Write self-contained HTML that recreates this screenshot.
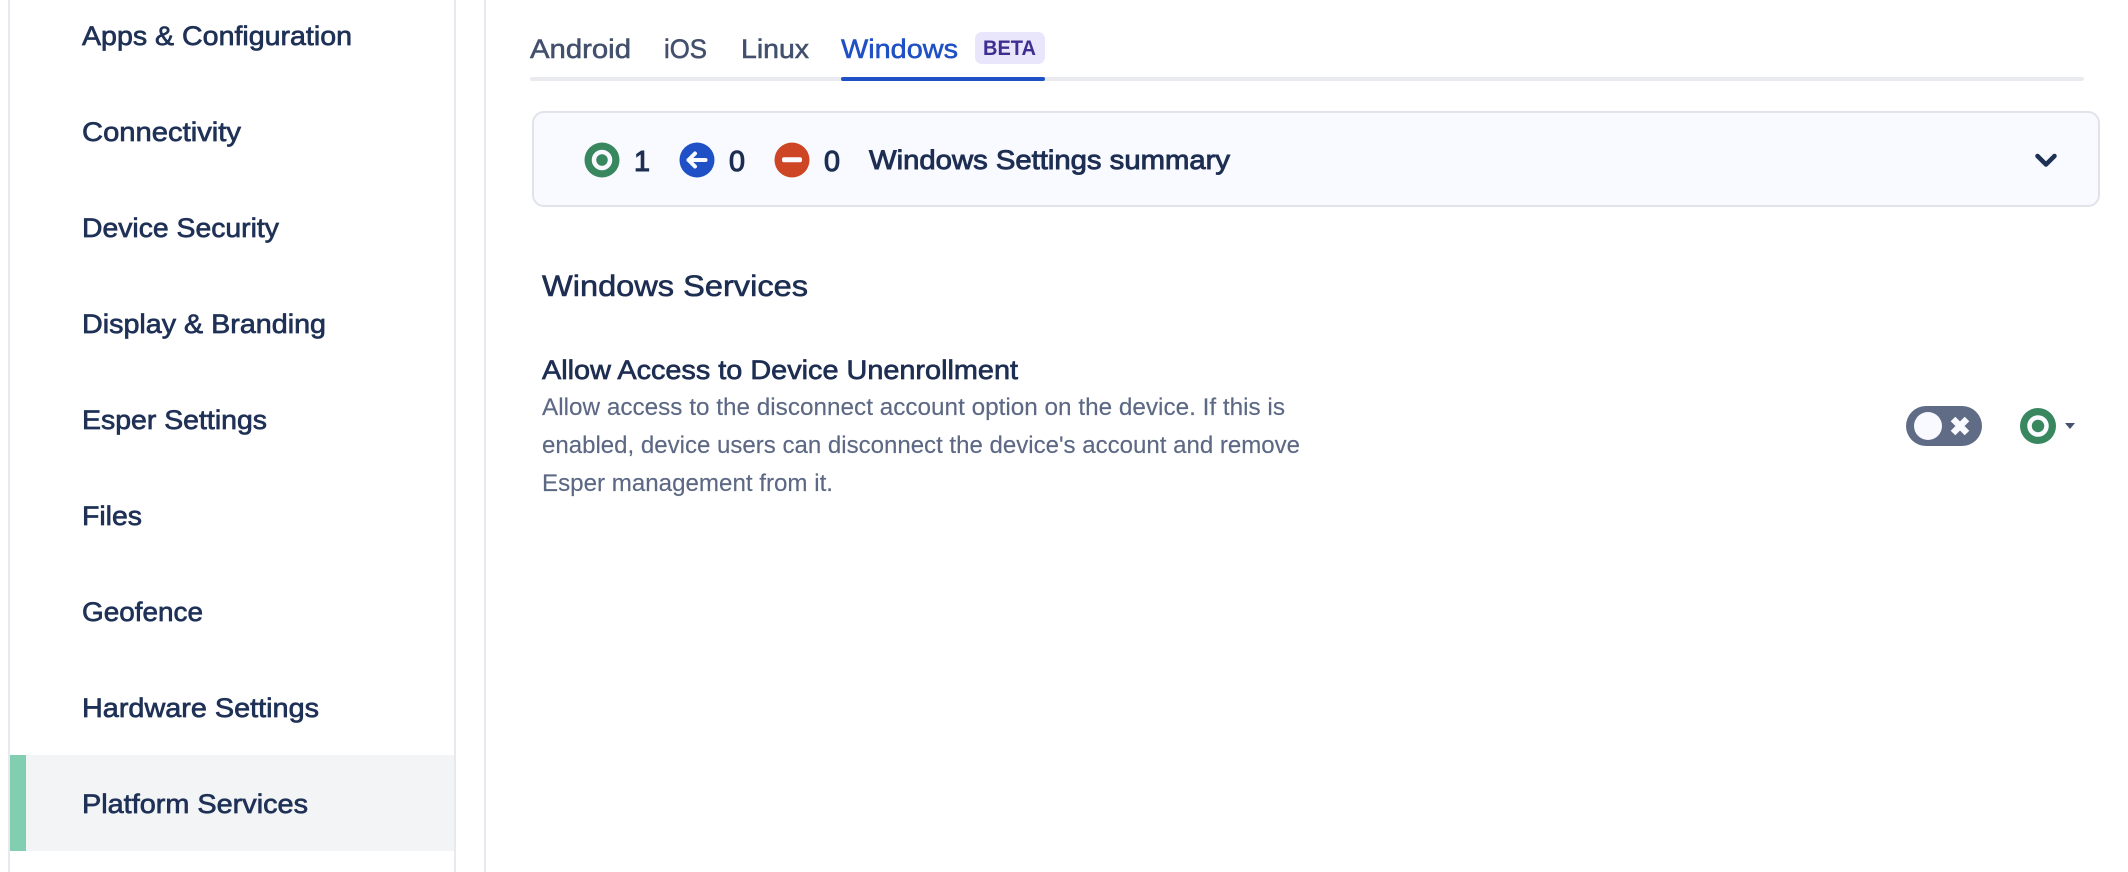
<!DOCTYPE html>
<html lang="en">
<head>
<meta charset="utf-8">
<title>Windows Settings</title>
<style>
html,body{margin:0;padding:0;width:2128px;height:872px;background:#fff;overflow:hidden}
svg{display:block}
text{font-family:"Liberation Sans",sans-serif}
.nav{font-size:27px;fill:#1f3156;stroke:#1f3156;stroke-width:.7px}
.tab{font-size:27px;fill:#43506d;stroke:#43506d;stroke-width:.55px}
.sum{font-size:27px;fill:#1d2e52;stroke:#1d2e52;stroke-width:.9px}
.num{font-size:29px;fill:#1d2e52;stroke:#1d2e52;stroke-width:1.1px}
.desc{font-size:24.5px;fill:#5c6884;stroke:#5c6884;stroke-width:.15px}
</style>
</head>
<body>
<svg width="2128" height="872" viewBox="0 0 2128 872" xmlns="http://www.w3.org/2000/svg">
  <rect x="8" y="0" width="2" height="872" fill="#e8e9ef"/>
  <rect x="454" y="0" width="2" height="872" fill="#e8e9ef"/>
  <rect x="484" y="0" width="2" height="872" fill="#e8e9ef"/>
  <rect x="26" y="755" width="428" height="96" fill="#f3f4f6"/>
  <rect x="10" y="755" width="16" height="96" fill="#82ceb0"/>

  <text class="nav" x="82" y="45" textLength="270" lengthAdjust="spacingAndGlyphs">Apps &amp; Configuration</text>
  <text class="nav" x="82" y="141" textLength="159" lengthAdjust="spacingAndGlyphs">Connectivity</text>
  <text class="nav" x="82" y="237" textLength="197" lengthAdjust="spacingAndGlyphs">Device Security</text>
  <text class="nav" x="82" y="333" textLength="244" lengthAdjust="spacingAndGlyphs">Display &amp; Branding</text>
  <text class="nav" x="82" y="429" textLength="185" lengthAdjust="spacingAndGlyphs">Esper Settings</text>
  <text class="nav" x="82" y="525" textLength="60" lengthAdjust="spacingAndGlyphs">Files</text>
  <text class="nav" x="82" y="621" textLength="121" lengthAdjust="spacingAndGlyphs">Geofence</text>
  <text class="nav" x="82" y="717" textLength="237" lengthAdjust="spacingAndGlyphs">Hardware Settings</text>
  <text class="nav" x="82" y="813" textLength="226" lengthAdjust="spacingAndGlyphs">Platform Services</text>

  <text class="tab" x="530" y="58" textLength="101" lengthAdjust="spacingAndGlyphs">Android</text>
  <text class="tab" x="664" y="58" textLength="43" lengthAdjust="spacingAndGlyphs">iOS</text>
  <text class="tab" x="741" y="58" textLength="68" lengthAdjust="spacingAndGlyphs">Linux</text>
  <text class="tab" x="841" y="58" textLength="117" lengthAdjust="spacingAndGlyphs" style="fill:#2050c5;stroke:#2050c5">Windows</text>
  <rect x="975" y="32" width="70" height="32" rx="7" fill="#e9e5fa"/>
  <text x="983" y="55" font-size="21.500" font-weight="700" fill="#3f2e91" textLength="53" lengthAdjust="spacingAndGlyphs">BETA</text>
  <rect x="530" y="77" width="1554" height="4" rx="2" fill="#e9eaef"/>
  <rect x="841" y="77" width="204" height="4" rx="2" fill="#2050c5"/>

  <rect x="533" y="112" width="1566" height="94" rx="11" fill="#f9faff" stroke="#e2e3ea" stroke-width="2"/>

  <circle cx="602" cy="160" r="17.500" fill="#38875f"/>
  <circle cx="602" cy="160" r="8" fill="none" stroke="#f9faff" stroke-width="4.500"/>
  <text class="num" x="634" y="171" textLength="16" lengthAdjust="spacingAndGlyphs">1</text>

  <circle cx="697" cy="160" r="17.500" fill="#2050c5"/>
  <path d="M688.500 160H705.500M695 153.500L688.500 160L695 166.500" fill="none" stroke="#f9faff" stroke-width="4" stroke-linecap="round" stroke-linejoin="round"/>
  <text class="num" x="729" y="171" textLength="16" lengthAdjust="spacingAndGlyphs">0</text>

  <circle cx="792" cy="160" r="17.500" fill="#cd4525"/>
  <rect x="782" y="157.300" width="20" height="5" rx="2" fill="#f9faff"/>
  <text class="num" x="824" y="171" textLength="16" lengthAdjust="spacingAndGlyphs">0</text>

  <text class="sum" x="869" y="169" textLength="361" lengthAdjust="spacingAndGlyphs">Windows Settings summary</text>
  <path d="M2037.500 156L2046 164.500L2054.500 156" fill="none" stroke="#1e3054" stroke-width="4.500" stroke-linecap="round" stroke-linejoin="round"/>

  <text class="sum" x="542" y="296" textLength="266" lengthAdjust="spacingAndGlyphs" style="font-size:30px;stroke-width:.6px">Windows Services</text>
  <text class="sum" x="542" y="379" textLength="476" lengthAdjust="spacingAndGlyphs" style="stroke-width:.7px">Allow Access to Device Unenrollment</text>
  <text class="desc" x="542" y="415" textLength="743" lengthAdjust="spacingAndGlyphs">Allow access to the disconnect account option on the device. If this is</text>
  <text class="desc" x="542" y="453" textLength="758" lengthAdjust="spacingAndGlyphs">enabled, device users can disconnect the device's account and remove</text>
  <text class="desc" x="542" y="491" textLength="291" lengthAdjust="spacingAndGlyphs">Esper management from it.</text>

  <rect x="1906" y="406" width="76" height="40" rx="20" fill="#606b85"/>
  <circle cx="1928" cy="426" r="14" fill="#f9faff"/>
  <path d="M1953 419L1967 433M1967 419L1953 433" fill="none" stroke="#f9faff" stroke-width="6.500"/>

  <circle cx="2038" cy="426" r="18" fill="#38875f"/>
  <circle cx="2038" cy="426" r="8.500" fill="none" stroke="#fbfcff" stroke-width="4.500"/>
  <path d="M2065 423H2075L2070 429Z" fill="#465170"/>
</svg>
</body>
</html>
